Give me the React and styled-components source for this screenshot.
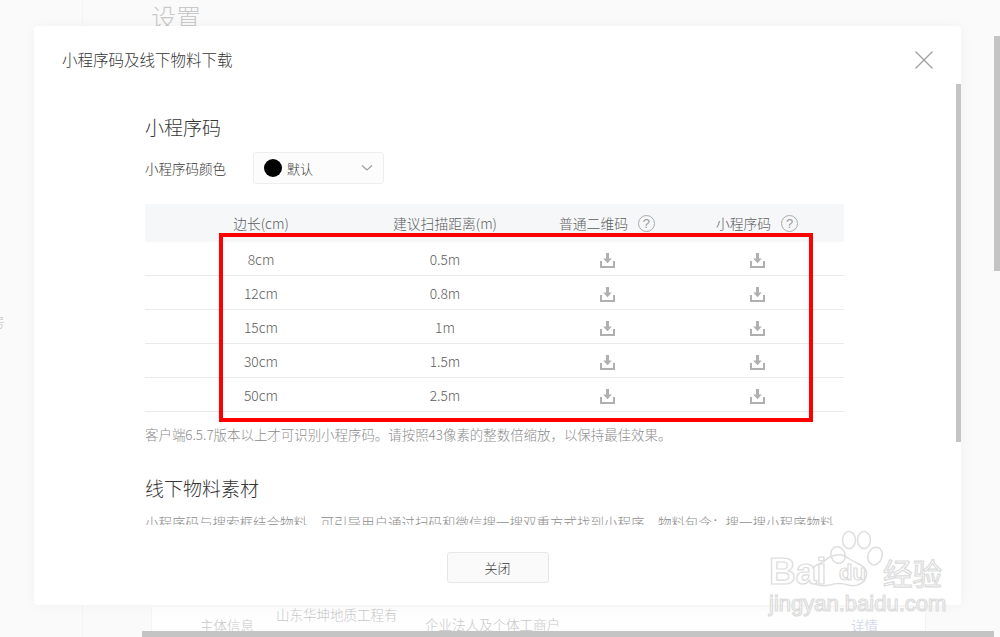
import React from 'react'
import styled, { createGlobalStyle } from 'styled-components'

const GlobalStyle = createGlobalStyle`
  html, body {
    margin: 0;
    padding: 0;
    height: 100%;
    overflow: hidden;
    background: #fafafb;
    font-family: "Noto Sans CJK SC", "Liberation Sans", sans-serif;
    font-weight: 300;
  }
`

const Page = styled.div`
  position: relative;
  width: 1000px;
  height: 637px;
  overflow: hidden;
  display: flex;
  background: #fafafb;
`

const SideNav = styled.div`
  width: 82px;
  height: 324px;
  box-sizing: content-box;
  border-right: 1px solid #f3f3f4;
  flex-shrink: 0;
  overflow: hidden;
  padding-top: 313px;
`

const NavLabel = styled.div`
  margin-left: -8px;
  font-size: 13px;
  line-height: 18px;
  color: #bdbdbd;
`

const Content = styled.div`
  flex: 1;
  padding: 0 0 0 68px;
  display: flex;
  flex-direction: column;
  justify-content: space-between;
`

const PageTitle = styled.div`
  font-size: 25px;
  line-height: 32px;
  color: #c9c9ca;
`

const InfoRow = styled.div`
  display: flex;
  box-sizing: border-box;
  width: 775px;
  height: 30px;
  align-items: flex-start;
  padding: 0 0 0 48px;
  background: #fefefe;
  border-left: 1px solid #f3f3f4;
  border-right: 1px solid #f3f3f4;
  color: #c8c8c9;
  font-size: 13.5px;
  overflow: hidden;
`

const InfoLabel = styled.div`
  width: 76px;
  line-height: 20px;
  padding-top: 8px;
`

const InfoName = styled.div`
  width: 125px;
  margin-right: 24px;
  line-height: 22px;
  margin-top: -4px;
`

const InfoKind = styled.div`
  width: 426px;
  line-height: 20px;
  padding-top: 7px;
`

const InfoLink = styled.div`
  line-height: 20px;
  padding-top: 8px;
  color: #c3cce4;
`

const PageScrollV = styled.div`
  position: absolute;
  right: 0;
  top: 36px;
  width: 6px;
  height: 235px;
  background: #c4c4c4;
`

const PageScrollH = styled.div`
  position: absolute;
  left: 142px;
  bottom: 0;
  width: 852px;
  height: 6px;
  background: #c4c4c4;
`

const Modal = styled.div`
  position: absolute;
  left: 34px;
  top: 26px;
  width: 927px;
  height: 579px;
  background: #fff;
  border-radius: 4px;
  box-shadow: 0 0 14px rgba(0, 0, 0, 0.04);
  display: flex;
  flex-direction: column;
  overflow: hidden;
`

const ModalHeader = styled.div`
  height: 68px;
  flex-shrink: 0;
  display: flex;
  align-items: center;
  justify-content: space-between;
  padding: 0 28px;
`

const ModalTitle = styled.div`
  font-size: 15.5px;
  line-height: 20px;
  margin-bottom: 2px;
  color: #353535;
`

const CloseIcon = styled.svg`
  width: 18px;
  height: 18px;
  display: block;
  stroke: #a0a0a0;
  stroke-width: 1.3;
  fill: none;
`

const ModalBody = styled.div`
  height: 431px;
  flex-shrink: 0;
  overflow: hidden;
  padding: 21px 117px 0 111px;
  box-sizing: border-box;
`

const SectionTitle = styled.div`
  font-size: 19px;
  line-height: 26px;
  margin-top: -1px;
  color: #353535;
`

const ColorRow = styled.div`
  display: flex;
  align-items: center;
  margin-top: 12px;
  height: 32px;
`

const ColorLabel = styled.div`
  width: 108px;
  font-size: 13.5px;
  color: #353535;
`

const Select = styled.div`
  width: 131px;
  height: 32px;
  box-sizing: border-box;
  border: 1px solid #eeeeef;
  border-radius: 3px;
  background: #fcfcfc;
  display: flex;
  align-items: center;
  padding: 0 10px;
  font-size: 13px;
  color: #353535;
`

const ColorDot = styled.span`
  width: 18px;
  height: 18px;
  border-radius: 50%;
  background: #000;
  margin-right: 5px;
  flex-shrink: 0;
`

const SelectText = styled.span`
  flex: 1;
  padding-top: 1px;
`

const Table = styled.div`
  margin-top: 20px;
`

const RowGrid = styled.div`
  display: grid;
  grid-template-columns: 232px 136px 188px 112px 31px;
  align-items: center;
  text-align: center;
  box-sizing: border-box;
  font-size: 13.8px;
  color: #5c5c5c;
  height: ${p => (p.$head ? '38px' : '34px')};
  background: ${p => (p.$head ? '#f6f7f9' : 'transparent')};
  border-bottom: ${p => (p.$head ? 'none' : '1px solid #eaeaeb')};
`

const HeadCell = styled.div`
  display: flex;
  align-items: center;
  justify-content: center;
  gap: 10px;
`

const HelpMark = styled.span`
  width: 17px;
  height: 17px;
  box-sizing: border-box;
  border: 1px solid #ababab;
  border-radius: 50%;
  color: #9a9a9a;
  font-size: 13px;
  line-height: 15px;
  text-align: center;
  font-family: "Liberation Sans", sans-serif;
`

const IconCell = styled.div`
  display: flex;
  justify-content: center;
  padding-top: 3px;
`

const DownloadIcon = styled.svg`
  width: 15px;
  height: 15px;
  display: block;
  fill: #b0b0b0;
`

const Note = styled.div`
  margin-top: 12px;
  font-size: 13.45px;
  line-height: 20px;
  color: #8c8c8c;
  white-space: nowrap;
`

const SecondTitle = styled(SectionTitle)`
  margin-top: 31px;
`

const Paragraph = styled.div`
  margin-top: 11px;
  font-size: 13.5px;
  line-height: 20px;
  color: #8c8c8c;
  white-space: nowrap;
`

const ModalFooter = styled.div`
  flex: 1;
  display: flex;
  justify-content: center;
  align-items: flex-start;
  padding-top: 27px;
`

const CloseButton = styled.button`
  width: 102px;
  height: 31px;
  box-sizing: border-box;
  border: 1px solid #e7e7e8;
  border-radius: 3px;
  background: #fafafa;
  color: #353535;
  font-family: inherit;
  font-weight: inherit;
  font-size: 13px;
  padding: 0;
`

const ModalScroll = styled.div`
  position: absolute;
  right: 0;
  top: 58px;
  width: 5px;
  height: 358px;
  background: #c4c4c4;
`

const Annotation = styled.div`
  position: absolute;
  left: 219px;
  top: 233px;
  width: 594px;
  height: 189px;
  box-sizing: border-box;
  border: 4px solid #fe0000;
`

const Watermark = styled.div`
  position: absolute;
  left: 765px;
  top: 528px;
  width: 185px;
  height: 90px;
`

const Paw = styled.svg`
  position: absolute;
  left: 0;
  top: 0;
  width: 185px;
  height: 65px;
  fill: none;
  stroke: #dedede;
  stroke-width: 1.5;
`

const hollow = `
  color: #fff;
  -webkit-text-stroke: 1.2px #dcdcdc;
`

const WatermarkBrand = styled.span`
  position: absolute;
  left: 4px;
  top: 22px;
  font-family: "Liberation Sans", sans-serif;
  font-weight: 700;
  font-size: 37px;
  line-height: 44px;
  ${hollow}
`

const WatermarkDu = styled.span`
  position: absolute;
  left: 74px;
  top: 32px;
  font-family: "Liberation Sans", sans-serif;
  font-weight: 700;
  font-size: 22px;
  line-height: 26px;
  ${hollow}
`

const WatermarkCn = styled.span`
  position: absolute;
  left: 118px;
  top: 22px;
  font-size: 29.5px;
  font-weight: 400;
  line-height: 44px;
  ${hollow}
`

const WatermarkUrl = styled.span`
  position: absolute;
  left: 4px;
  top: 63px;
  font-family: "Liberation Sans", sans-serif;
  font-size: 22px;
  line-height: 26px;
  ${hollow}
`

const rows = [
  ['8cm', '0.5m'],
  ['12cm', '0.8m'],
  ['15cm', '1m'],
  ['30cm', '1.5m'],
  ['50cm', '2.5m'],
]

const Download = () => (
  <DownloadIcon viewBox="0 0 15 15">
    <path d="M6 0h3v5.5h2.8L7.5 10.2 3.2 5.5H6z" />
    <path d="M0 8h2v5h11V8h2v7H0z" />
  </DownloadIcon>
)

const App = () => {
  return (
    <>
      <GlobalStyle />
      <Page>
        <SideNav>
          <NavLabel>号</NavLabel>
        </SideNav>
        <Content>
          <PageTitle>设置</PageTitle>
          <InfoRow>
            <InfoLabel>主体信息</InfoLabel>
            <InfoName>山东华坤地质工程有限公司</InfoName>
            <InfoKind>企业法人及个体工商户</InfoKind>
            <InfoLink>详情</InfoLink>
          </InfoRow>
        </Content>
        <PageScrollV />
        <PageScrollH />
        <Modal>
          <ModalHeader>
            <ModalTitle>小程序码及线下物料下载</ModalTitle>
            <CloseIcon viewBox="0 0 18 18">
              <path d="M0.5 0.5l17 17M17.5 0.5l-17 17" />
            </CloseIcon>
          </ModalHeader>
          <ModalBody>
            <SectionTitle>小程序码</SectionTitle>
            <ColorRow>
              <ColorLabel>小程序码颜色</ColorLabel>
              <Select>
                <ColorDot />
                <SelectText>默认</SelectText>
                <svg width="12" height="12" viewBox="0 0 12 12" fill="none" stroke="#a0a0a0" strokeWidth="1.3">
                  <path d="M1 3.5l5 4.5 5-4.5" />
                </svg>
              </Select>
            </ColorRow>
            <Table>
              <RowGrid $head>
                <div>边长(cm)</div>
                <div>建议扫描距离(m)</div>
                <HeadCell>普通二维码<HelpMark>?</HelpMark></HeadCell>
                <HeadCell>小程序码<HelpMark>?</HelpMark></HeadCell>
              </RowGrid>
              {rows.map(([side, dist]) => (
                <RowGrid key={side}>
                  <div>{side}</div>
                  <div>{dist}</div>
                  <IconCell><Download /></IconCell>
                  <IconCell><Download /></IconCell>
                </RowGrid>
              ))}
            </Table>
            <Note>客户端6.5.7版本以上才可识别小程序码。请按照43像素的整数倍缩放，以保持最佳效果。</Note>
            <SecondTitle>线下物料素材</SecondTitle>
            <Paragraph>小程序码与搜索框结合物料，可引导用户通过扫码和微信搜一搜双重方式找到小程序。物料包含：搜一搜小程序物料</Paragraph>
          </ModalBody>
          <ModalFooter>
            <CloseButton>关闭</CloseButton>
          </ModalFooter>
          <ModalScroll />
        </Modal>
        <Annotation />
        <Watermark>
          <Paw viewBox="0 0 185 65">
            <path d="M63 30c5-3 9-4 14-3 6 2 9 6 15 8 7 3 11 8 9 14-2 7-10 10-18 8-6-2-12-2-18 0-9 2-17 0-19-7-2-6 2-12 8-14 3-1 6-3 9-6z" />
            <ellipse cx="73" cy="27" rx="7" ry="8.5" transform="rotate(-20 73 27)" />
            <ellipse cx="84" cy="12" rx="6.5" ry="8.5" />
            <ellipse cx="99" cy="12" rx="6.5" ry="8.5" />
            <ellipse cx="110" cy="28" rx="7" ry="9" transform="rotate(20 110 28)" />
          </Paw>
          <WatermarkBrand>Bai</WatermarkBrand>
          <WatermarkDu>du</WatermarkDu>
          <WatermarkCn>经验</WatermarkCn>
          <WatermarkUrl>jingyan.baidu.com</WatermarkUrl>
        </Watermark>
      </Page>
    </>
  )
}

export default App
